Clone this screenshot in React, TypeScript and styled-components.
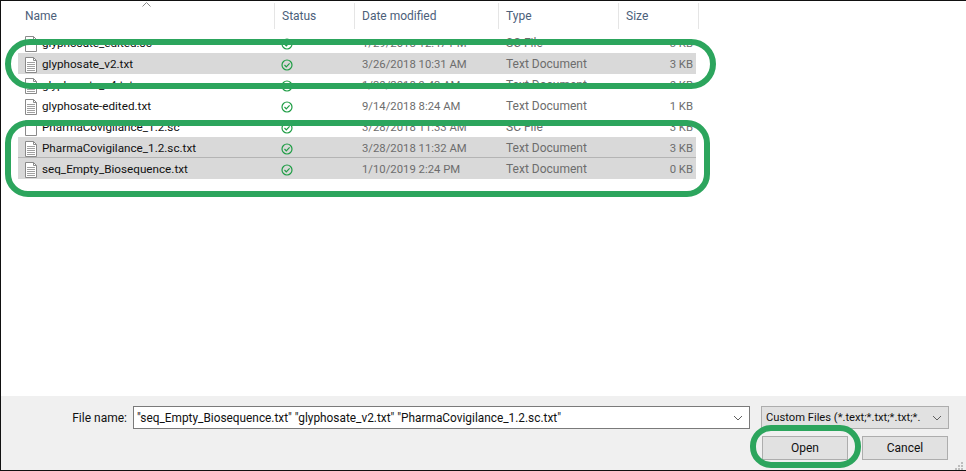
import React from "react";
import styled, { createGlobalStyle } from "styled-components";

const Global = createGlobalStyle`
  html, body { margin: 0; padding: 0; background: #fff; }
  * { box-sizing: border-box; }
`;

const Dialog = styled.div`
  position: relative;
  width: 966px;
  height: 471px;
  display: flex;
  flex-direction: column;
  overflow: hidden;
  background: #fff;
  border-top: 1px solid #111;
  border-left: 1px solid #111;
  border-bottom: 1px solid #111;
  font-family: Roboto, "Open Sans", sans-serif;
  font-size: 12px;
`;

const Main = styled.div`
  flex: 1;
  padding: 2px 0 0 17px;
  overflow: hidden;
`;

const Grid = `
  display: grid;
  grid-template-columns: 257px 80px 144px 120px 80px;
  width: 681px;
`;

const Header = styled.div`
  ${Grid}
  height: 25px;
  color: #4c607a;
`;

const HeadCell = styled.div`
  padding: 1px 0 0 7px;
  line-height: 25px;
  border-right: 1px solid #e5e5e5;
  position: relative;
`;

const SortArrow = styled.svg`
  position: absolute;
  left: 124px;
  top: -1px;
`;

const Rows = styled.div`
  margin-top: 4px;
`;

const Row = styled.div<{ $selected?: boolean }>`
  ${Grid}
  height: 21px;
  width: 678px;
  line-height: 23px;
  color: #6d6d6d;
  background: ${(p) => (p.$selected ? "#d9d9d9" : "transparent")};
`;

const RowDivider = styled.div`
  height: 1px;
  width: 678px;
  background: #b4b4b4;
  margin-top: -1px;
  position: relative;
`;

const NameCell = styled.div`
  display: flex;
  align-items: center;
  gap: 4px;
  padding-left: 7px;
  color: #111;
  font-size: 11.7px;
`;

const NameText = styled.span`
  line-height: 21px;
`;

const StatusCell = styled.div`
  display: flex;
  align-items: center;
  padding-left: 6px;
`;

const DateCell = styled.div`
  padding-left: 7px;
  font-size: 11.3px;
`;

const TypeCell = styled.div`
  padding-left: 7px;
`;

const SizeCell = styled.div`
  text-align: right;
  padding-right: 6px;
  font-size: 11.3px;
`;

const Footer = styled.div`
  height: 74px;
  background: #f0f0f0;
  padding: 10px 17px 0 0;
  display: flex;
  flex-direction: column;
  gap: 7px;
  position: relative;
  color: #111;
`;

const TopLine = styled.div`
  display: flex;
  align-items: center;
  justify-content: flex-end;
`;

const Label = styled.label`
  margin-right: 6px;
`;

const InputBox = styled.div`
  width: 617px;
  height: 23px;
  background: #fff;
  border: 1px solid #7a7a7a;
  display: flex;
  align-items: center;
  justify-content: space-between;
  padding: 0 6px 0 3px;
  margin-right: 11px;
  white-space: nowrap;
  font-size: 11.85px;
`;

const Combo = styled.div`
  width: 188px;
  height: 23px;
  background: #e1e1e1;
  border: 1px solid #adadad;
  display: flex;
  align-items: center;
  justify-content: space-between;
  padding: 0 6px 0 4px;
  white-space: nowrap;
  font-size: 11.2px;
`;

const Buttons = styled.div`
  display: flex;
  justify-content: flex-end;
  gap: 14px;
  padding-right: 1px;
`;

const Button = styled.button`
  width: 86px;
  height: 24px;
  background: #e1e1e1;
  border: 1px solid #adadad;
  font: inherit;
  color: #111;
  padding: 0;
`;

const Grip = styled.svg`
  position: absolute;
  right: 3px;
  bottom: 0;
`;

const Ring = styled.div<{ $l: number; $t: number; $w: number; $h: number; $r: number }>`
  position: absolute;
  left: ${(p) => p.$l}px;
  top: ${(p) => p.$t}px;
  width: ${(p) => p.$w}px;
  height: ${(p) => p.$h}px;
  border: 6px solid #2ca55d;
  border-radius: ${(p) => p.$r}px;
  pointer-events: none;
`;

const FileIcon = ({ blank }: { blank?: boolean }) => (
  <svg width="13" height="16" viewBox="0 0 13 16" fill="none">
    <path d="M.5 .5H8.5L11.5 3.5V15.5H.5Z" fill="#fff" stroke="#8a8a8a" />
    <path d="M8.5 .5V3.5H11.5" stroke="#8a8a8a" />
    {!blank && (
      <path d="M2 5.5H10M2 7.5H10M2 9.5H10M2 11.5H10M2 13.5H10" stroke="#a0a0a0" />
    )}
  </svg>
);

const CheckIcon = () => (
  <svg width="12" height="12" viewBox="0 0 12 12" fill="none">
    <circle cx="6" cy="6" r="5" stroke="#1f9d45" strokeWidth="1.2" />
    <path d="M3.5 6L5.3 7.8L8.6 4.4" stroke="#1f9d45" strokeWidth="1.2" />
  </svg>
);

const Chevron = () => (
  <svg width="10" height="6" viewBox="0 0 10 6" fill="none">
    <path d="M1 1L5 5L9 1" stroke="#606060" />
  </svg>
);

const files = [
  { name: "glyphosate_edited.sc", date: "1/29/2018 12:47 PM", type: "SC File", size: "3 KB", blank: true },
  { name: "glyphosate_v2.txt", date: "3/26/2018 10:31 AM", type: "Text Document", size: "3 KB", selected: true },
  { name: "glyphosate_v4.txt", date: "1/30/2018 9:43 AM", type: "Text Document", size: "0 KB" },
  { name: "glyphosate-edited.txt", date: "9/14/2018 8:24 AM", type: "Text Document", size: "1 KB" },
  { name: "PharmaCovigilance_1.2.sc", date: "3/28/2018 11:33 AM", type: "SC File", size: "3 KB", blank: true },
  { name: "PharmaCovigilance_1.2.sc.txt", date: "3/28/2018 11:32 AM", type: "Text Document", size: "3 KB", selected: true },
  { name: "seq_Empty_Biosequence.txt", date: "1/10/2019 2:24 PM", type: "Text Document", size: "0 KB", selected: true, divider: true },
];

export default function App() {
  return (
    <Dialog>
      <Global />
      <Main>
        <Header>
          <HeadCell>
            Name
            <SortArrow width="9" height="5" viewBox="0 0 9 5" fill="none">
              <path d="M.5 4.5L4.5 .5L8.5 4.5" stroke="#8a8a8a" />
            </SortArrow>
          </HeadCell>
          <HeadCell>Status</HeadCell>
          <HeadCell>Date modified</HeadCell>
          <HeadCell>Type</HeadCell>
          <HeadCell>Size</HeadCell>
        </Header>
        <Rows>
          {files.map((f) => (
            <React.Fragment key={f.name}>
              {f.divider && <RowDivider />}
              <Row $selected={f.selected}>
                <NameCell>
                  <FileIcon blank={f.blank} />
                  <NameText>{f.name}</NameText>
                </NameCell>
                <StatusCell>
                  <CheckIcon />
                </StatusCell>
                <DateCell>{f.date}</DateCell>
                <TypeCell>{f.type}</TypeCell>
                <SizeCell>{f.size}</SizeCell>
              </Row>
            </React.Fragment>
          ))}
        </Rows>
      </Main>
      <Footer>
        <TopLine>
          <Label>File name:</Label>
          <InputBox>
            <span>"seq_Empty_Biosequence.txt" "glyphosate_v2.txt" "PharmaCovigilance_1.2.sc.txt"</span>
            <Chevron />
          </InputBox>
          <Combo>
            <span>Custom Files (*.text;*.txt;*.txt;*.</span>
            <Chevron />
          </Combo>
        </TopLine>
        <Buttons>
          <Button>Open</Button>
          <Button>Cancel</Button>
        </Buttons>
        <Grip width="8" height="8" viewBox="0 0 8 8" fill="#bdbdbd">
          <rect x="6" y="0" width="2" height="2" />
          <rect x="3" y="3" width="2" height="2" />
          <rect x="6" y="3" width="2" height="2" />
          <rect x="0" y="6" width="2" height="2" />
          <rect x="3" y="6" width="2" height="2" />
          <rect x="6" y="6" width="2" height="2" />
        </Grip>
      </Footer>
      <Ring $l={4} $t={38} $w={711} $h={50} $r={25} />
      <Ring $l={4} $t={119} $w={705} $h={77} $r={23} />
      <Ring $l={749} $t={424} $w={111} $h={43} $r={21} />
    </Dialog>
  );
}
